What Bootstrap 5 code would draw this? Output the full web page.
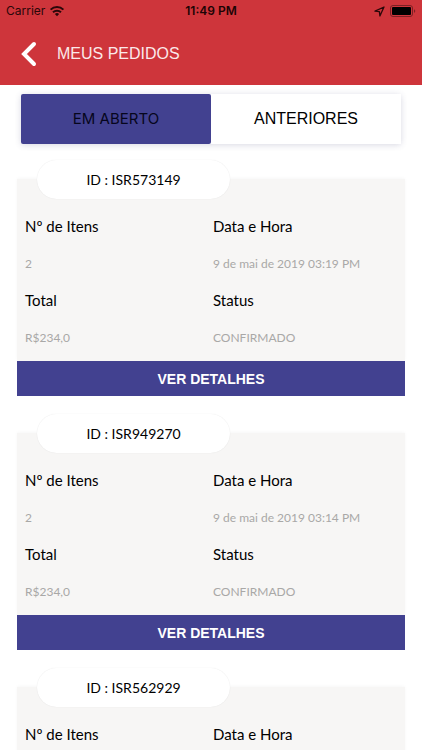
<!DOCTYPE html>
<html lang="pt-BR">
<head>
<meta charset="utf-8">
<meta name="viewport" content="width=device-width, initial-scale=1">
<title>Meus Pedidos</title>
<link rel="stylesheet" href="https://cdn.jsdelivr.net/npm/bootstrap@5.3.0/dist/css/bootstrap.min.css">
<style>
:root { --brand-red: #ce353b; --brand-blue: #424190; }
html { scrollbar-width: none; }
::-webkit-scrollbar { display: none; }
body { font-family: Lato, sans-serif; color: #000; }
.app-header { background: var(--brand-red); }
.status-bar { height: 22px; padding: 0 6px; font: 12px/22px Inter, sans-serif; color: #2a0709; }
.clock { font-weight: 600; color: #1c0405; }
.title-bar { height: 63px; padding: 0 20px; gap: 19px; }
.page-title { font: 16px/24px "Liberation Sans", sans-serif; color: #fbe9ea; }
.tabs-box { margin: 9px 21px 16px; box-shadow: 0 1px 6px rgba(60, 60, 110, .2); border-radius: 2px; }
.tab-btn { height: 50px; border: 0; background: #fff; color: #000; font: 16px/24px "Liberation Sans", sans-serif; }
.tab-btn.active { background: var(--brand-blue); color: #06061c; font: 15px/24px Inter, sans-serif; border-radius: 2px; }
.orders { padding: 0 17px; gap: 18px; }
.order-id { width: 193px; height: 39px; margin-left: 20px; font-size: 14px; line-height: 39px; box-shadow: 0 0 1px rgba(0, 0, 0, .12); }
.order-body { margin-top: -20px; padding: 29px 4px 5px 8px; background: #f7f6f5; box-shadow: 0 -1px 3px rgba(0, 0, 0, .03); }
.order-body dt, .order-body dd { line-height: 37px; margin: 0; }
.order-body dt { font-size: 15px; font-weight: 400; }
.order-body dd { font-size: 12px; color: #a9a8a7; }
.details-btn { height: 35px; border: 0; background: var(--brand-blue); color: #fff; font: bold 14px/35px "Liberation Sans", sans-serif; }
</style>
<script defer src="https://cdn.jsdelivr.net/npm/bootstrap@5.3.0/dist/js/bootstrap.bundle.min.js"></script>
</head>
<body class="bg-white">
<header class="app-header">
  <div class="status-bar row g-0">
    <div class="col d-flex align-items-center gap-1">
      <span>Carrier</span>
      <svg width="16" height="12" viewBox="0 0 16 12" fill="none" stroke="currentColor" stroke-width="2" aria-hidden="true"><path d="M1.6 4.6a9.2 9.2 0 0 1 12.8 0M4 7.3a5.8 5.8 0 0 1 8 0"/><path d="M8 11.2 5.9 9.1a3 3 0 0 1 4.2 0Z" fill="currentColor" stroke="none"/></svg>
    </div>
    <div class="col-auto clock">11:49 PM</div>
    <div class="col d-flex align-items-center justify-content-end gap-1">
      <svg width="11" height="11" viewBox="0 0 11 11" fill="none" stroke="currentColor" stroke-width="1.3" stroke-linejoin="round" aria-hidden="true"><path d="M1 5.2 10 1 5.9 10 5.4 5.6Z"/></svg>
      <svg width="27" height="12" viewBox="0 0 27 12" aria-hidden="true"><rect x="1.5" y=".5" width="22" height="11" rx="2.5" fill="none" stroke="#7c2024"/><rect x="3" y="2" width="19" height="8" rx="1" fill="#000"/><path d="M25 4.2c1.7.4 1.7 3.2 0 3.6Z" fill="#7c2024"/></svg>
    </div>
  </div>
  <div class="title-bar d-flex align-items-center">
    <button type="button" class="btn p-0 border-0 d-flex" aria-label="Voltar">
      <svg width="18" height="26" viewBox="0 0 18 26" fill="none" stroke="#fff" stroke-width="4" stroke-linecap="round" aria-hidden="true"><path d="M14 3 4 13l10 10"/></svg>
    </button>
    <h1 class="page-title m-0">MEUS PEDIDOS</h1>
  </div>
</header>
<main>
  <div class="tabs-box d-flex" role="tablist">
    <button type="button" class="tab-btn active col-6" role="tab" aria-selected="true">EM ABERTO</button>
    <button type="button" class="tab-btn col-6" role="tab" aria-selected="false">ANTERIORES</button>
  </div>
  <div class="orders d-flex flex-column">
    <article>
      <h2 class="order-id position-relative bg-white rounded-pill text-center mb-0 fw-normal">ID : ISR573149</h2>
      <div class="order-body row g-0">
        <dl class="col-6 m-0"><dt>Nº de Itens</dt><dd>2</dd><dt>Total</dt><dd>R$234,0</dd></dl>
        <dl class="col-6 m-0"><dt>Data e Hora</dt><dd>9 de mai de 2019 03:19 PM</dd><dt>Status</dt><dd>CONFIRMADO</dd></dl>
      </div>
      <button type="button" class="details-btn d-block w-100">VER DETALHES</button>
    </article>
    <article>
      <h2 class="order-id position-relative bg-white rounded-pill text-center mb-0 fw-normal">ID : ISR949270</h2>
      <div class="order-body row g-0">
        <dl class="col-6 m-0"><dt>Nº de Itens</dt><dd>2</dd><dt>Total</dt><dd>R$234,0</dd></dl>
        <dl class="col-6 m-0"><dt>Data e Hora</dt><dd>9 de mai de 2019 03:14 PM</dd><dt>Status</dt><dd>CONFIRMADO</dd></dl>
      </div>
      <button type="button" class="details-btn d-block w-100">VER DETALHES</button>
    </article>
    <article>
      <h2 class="order-id position-relative bg-white rounded-pill text-center mb-0 fw-normal">ID : ISR562929</h2>
      <div class="order-body row g-0">
        <dl class="col-6 m-0"><dt>Nº de Itens</dt></dl>
        <dl class="col-6 m-0"><dt>Data e Hora</dt></dl>
      </div>
    </article>
  </div>
</main>
</body>
</html>
